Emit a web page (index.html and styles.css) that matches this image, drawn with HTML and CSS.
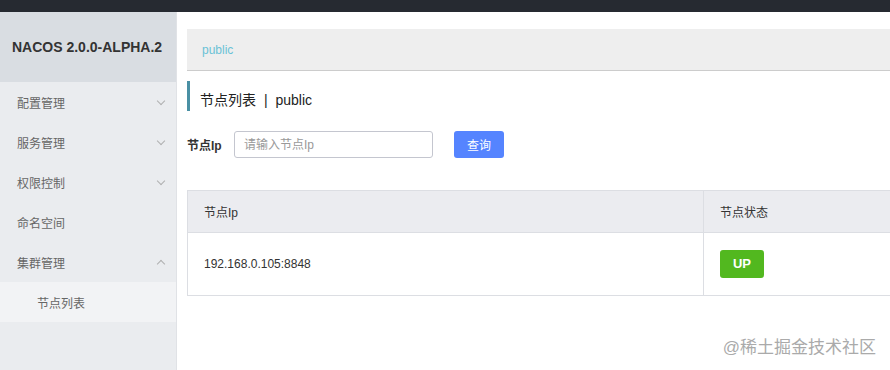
FILE: index.html
```html
<!DOCTYPE html>
<html lang="zh">
<head>
  <meta charset="UTF-8">
  <title>Nacos 节点列表</title>
  <link rel="stylesheet" href="styles.css">
</head>
<body>
  <div class="topbar"></div>
  <div class="layout">
    <aside class="sidebar">
      <div class="logo">NACOS 2.0.0-ALPHA.2</div>
      <ul class="menu">
        <li class="menu-item">配置管理 <span class="arrow down"></span></li>
        <li class="menu-item">服务管理 <span class="arrow down"></span></li>
        <li class="menu-item">权限控制 <span class="arrow down"></span></li>
        <li class="menu-item">命名空间</li>
        <li class="menu-item">集群管理 <span class="arrow up"></span></li>
        <li class="menu-item sub">节点列表</li>
      </ul>
    </aside>

    <main class="main">
      <div class="ns-bar"><span class="ns-link">public</span></div>

      <h3 class="page-title">节点列表 <span class="sep">|</span> public</h3>

      <form class="search">
        <label for="ip">节点Ip</label>
        <input type="text" id="ip" placeholder="请输入节点Ip">
        <button type="button">查询</button>
      </form>

      <table class="nodes">
        <thead>
          <tr>
            <th class="col-ip">节点Ip</th>
            <th>节点状态</th>
          </tr>
        </thead>
        <tbody>
          <tr>
            <td class="col-ip">192.168.0.105:8848</td>
            <td><span class="badge">UP</span></td>
          </tr>
        </tbody>
      </table>

      <div class="watermark">@稀土掘金技术社区</div>
    </main>
  </div>
</body>
</html>
```

FILE: styles.css
```css
body {
  margin: 0;
  font-family: "Liberation Sans", "Noto Sans CJK SC", sans-serif;
  font-size: 12px;
  color: #333;
  background: #fff;
  overflow: hidden;
}

.topbar {
  height: 12px;
  background-color: #262a31;
}

.layout {
  display: flex;
  height: 358px;
}

/* sidebar */
.sidebar {
  width: 176px;
  background-color: #eaecef;
  border-right: 1px solid #e0e2e6;
  flex-shrink: 0;
}

.logo {
  height: 70px;
  display: flex;
  align-items: center;
  padding-left: 12px;
  background-color: #d9dde2;
  font-weight: bold;
  font-size: 14px;
  color: #333;
}

.menu {
  list-style: none;
  margin: 0;
  padding: 0;
}

.menu-item {
  height: 40px;
  display: flex;
  align-items: center;
  justify-content: space-between;
  padding: 0 12px 0 17px;
  color: #666;
  font-size: 12px;
}

.menu-item.sub {
  padding-left: 37px;
  background-color: #f2f3f5;
}

.arrow {
  width: 5px;
  height: 5px;
  border-right: 1px solid #b0b0b0;
  border-bottom: 1px solid #b0b0b0;
}

.arrow.down {
  transform: rotate(45deg);
  margin-top: -3px;
}

.arrow.up {
  transform: rotate(-135deg);
  margin-top: 3px;
}

/* main */
.main {
  flex: 1;
  min-width: 0;
  overflow: hidden;
  padding: 17px 0 0 10px;
  position: relative;
}

.ns-bar {
  height: 41px;
  background-color: #eeeeee;
  border-bottom: 1px solid #cccccc;
  display: flex;
  align-items: center;
  padding-left: 15px;
}

.ns-link {
  color: #6ac2d6;
  font-size: 12px;
}

.page-title {
  margin: 10px 0 0;
  height: 26px;
  line-height: 30px;
  padding-top: 4px;
  border-left: 3px solid #4a90a4;
  padding-left: 10px;
  font-size: 14px;
  font-weight: normal;
  color: #222;
}

.sep {
  margin: 0 4px;
}

.search {
  display: flex;
  align-items: center;
  margin-top: 20px;
}

.search label {
  font-weight: bold;
  width: 47px;
  color: #333;
}

.search input {
  width: 199px;
  height: 27px;
  box-sizing: border-box;
  border: 1px solid #c4c6cf;
  border-radius: 3px;
  padding: 0 9px;
  font-family: inherit;
  font-size: 12px;
}

.search input::placeholder {
  color: #999;
}

.search button {
  margin-left: 21px;
  width: 50px;
  height: 27px;
  border: none;
  border-radius: 3px;
  background-color: #5584ff;
  color: #fff;
  font-family: inherit;
  font-size: 12px;
}

.nodes {
  margin-top: 32px;
  width: 720px;
  border-collapse: collapse;
  border: 1px solid #dcdee3;
}

.nodes th {
  height: 41px;
  background-color: #ebecf0;
  font-weight: normal;
  text-align: left;
  padding: 0 16px;
  color: #333;
  border-left: 1px solid #dcdee3;
}

.nodes td {
  height: 62px;
  padding: 0 16px;
  border-top: 1px solid #dcdee3;
  border-left: 1px solid #dcdee3;
  color: #333;
}

.nodes .col-ip {
  width: 483px;
}

.badge {
  display: inline-block;
  width: 44px;
  height: 28px;
  line-height: 28px;
  text-align: center;
  background-color: #52b81f;
  color: #fff;
  font-weight: bold;
  font-size: 13px;
  border-radius: 3px;
}

.watermark {
  position: absolute;
  right: 14px;
  bottom: 12px;
  font-size: 17px;
  color: #aaa;
}
```
